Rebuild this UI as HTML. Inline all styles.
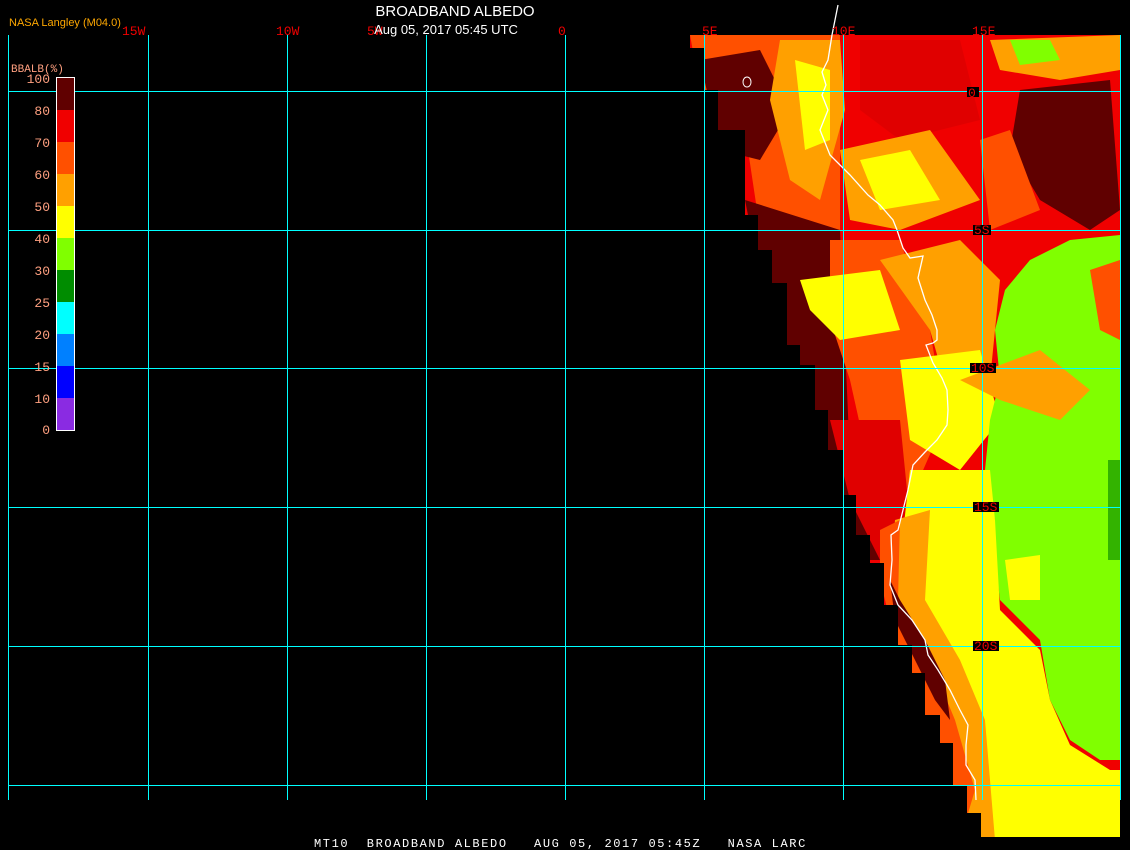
<!DOCTYPE html>
<html><head><meta charset="utf-8"><style>
html,body{margin:0;padding:0;background:#000;}
body{width:1130px;height:850px;overflow:hidden;position:relative;font-family:"Liberation Sans",sans-serif;}
</style></head><body>
<svg width="1130" height="850" style="position:absolute;left:0;top:0">
<defs>
<clipPath id="land">
<polygon points="690,35 1120,35 1120,837 981,837 981,813 967,813 967,785 953,785 953,743 940,743 940,715 925,715 925,673 912,673 912,645 898,645 898,605 884,605 884,563 870,563 870,535 856,535 856,495 843,495 843,450 828,450 828,410 815,410 815,365 800,365 800,345 787,345 787,283 772,283 772,250 758,250 758,215 745,215 745,130 718,130 718,90 705,90 705,48 690,48"/>
</clipPath>
</defs>
<g clip-path="url(#land)">
<rect x="680" y="30" width="450" height="820" fill="#f00000"/>
<path d="M690,35 L840,35 L840,230 L760,230 L745,130 L700,90Z" fill="#ff5000"/>
<path d="M700,60 L760,50 L790,110 L760,160 L720,150Z" fill="#600000"/>
<path d="M780,40 L840,40 L845,110 L820,200 L790,180 L770,100Z" fill="#ffa000"/>
<path d="M795,60 L830,70 L830,140 L805,150Z" fill="#ffff00"/>
<path d="M860,40 L960,40 L980,120 L900,140 L860,110Z" fill="#e00000"/>
<path d="M840,150 L930,130 L980,200 L900,230 L850,220Z" fill="#ffa000"/>
<path d="M860,160 L910,150 L940,200 L880,210Z" fill="#ffff00"/>
<path d="M990,40 L1120,35 L1120,70 L1060,80 L1000,70Z" fill="#ffa000"/>
<path d="M1010,40 L1050,40 L1060,60 L1020,65Z" fill="#80ff00"/>
<path d="M1020,90 L1110,80 L1120,210 L1090,230 L1040,200 L1010,150Z" fill="#600000"/>
<path d="M980,140 L1010,130 L1040,210 L990,230Z" fill="#ff5000"/>
<path d="M745,200 L840,230 L850,460 L870,540 L885,560 L860,560 L820,450 L780,350 L755,250Z" fill="#600000"/>
<path d="M830,240 L900,240 L930,330 L945,420 L910,500 L870,470 L850,380 L830,320Z" fill="#ff5000"/>
<path d="M880,260 L960,240 L1000,280 L990,380 L950,400 L930,330Z" fill="#ffa000"/>
<path d="M800,280 L880,270 L900,330 L840,340 L810,310Z" fill="#ffff00"/>
<path d="M900,360 L980,350 L1000,420 L960,470 L910,440Z" fill="#ffff00"/>
<path d="M830,420 L900,420 L910,520 L880,560 L850,500Z" fill="#e00000"/>
<path d="M1120,235 L1070,240 L1030,260 L1005,290 L995,330 L1000,380 L990,420 L985,470 L995,520 L995,560 L1000,600 L1040,640 L1050,700 L1070,740 L1100,760 L1120,760Z" fill="#80ff00"/>
<path d="M1090,270 L1120,260 L1120,340 L1100,330Z" fill="#ff5000"/>
<path d="M960,380 L1040,350 L1090,390 L1060,420 L1000,400Z" fill="#ffa000"/>
<path d="M910,470 L990,470 L995,520 L1000,610 L1040,650 L1050,700 L1070,745 L1110,770 L1120,770 L1120,840 L960,840 L945,760 L925,640 L900,560Z" fill="#ffff00"/>
<path d="M895,520 L930,510 L925,600 L960,660 L985,720 L995,840 L960,840 L940,740 L905,650 L890,580Z" fill="#ffa000"/>
<path d="M880,530 L900,520 L898,600 L930,660 L955,720 L975,790 L960,840 L940,800 L920,700 L895,640 L880,580Z" fill="#ff5000"/>
<path d="M890,580 L900,600 L925,640 L945,680 L950,720 L935,700 L910,650 L895,620Z" fill="#600000"/>
<path d="M1005,560 L1040,555 L1040,600 L1010,600Z" fill="#ffff00"/>
<rect x="1108" y="460" width="12" height="100" fill="#008000" opacity=".6"/>
</g>
<polyline fill="none" stroke="#fff" stroke-width="1.3" points="838,5 835,20 832,35 828,60 822,72 826,85 822,95 828,110 820,130 830,155 850,175 868,195 880,205 893,220 897,230 903,248 910,258 923,256 918,278 925,300 932,315 937,330 937,340 933,343 926,345 933,363 942,378 947,390 948,410 947,425 937,440 925,452 913,465 908,490 903,510 898,530 891,535 892,560 890,585 898,605 912,620 925,640 928,655 938,670 950,690 960,710 968,725 966,745 966,765 975,780 976,800"/>
<ellipse cx="747" cy="82" rx="4" ry="5" fill="none" stroke="#fff" stroke-width="1"/>
<g stroke="#00ffff" stroke-width="1" shape-rendering="crispEdges">
<line x1="8.5" y1="35" x2="8.5" y2="800"/><line x1="148.5" y1="35" x2="148.5" y2="800"/><line x1="287.5" y1="35" x2="287.5" y2="800"/><line x1="426.5" y1="35" x2="426.5" y2="800"/><line x1="565.5" y1="35" x2="565.5" y2="800"/><line x1="704.5" y1="35" x2="704.5" y2="800"/><line x1="843.5" y1="35" x2="843.5" y2="800"/><line x1="982.5" y1="35" x2="982.5" y2="800"/><line x1="1120.5" y1="35" x2="1120.5" y2="800"/>
<line x1="8" y1="91.5" x2="1120" y2="91.5"/><line x1="8" y1="230.5" x2="1120" y2="230.5"/><line x1="8" y1="368.5" x2="1120" y2="368.5"/><line x1="8" y1="507.5" x2="1120" y2="507.5"/><line x1="8" y1="646.5" x2="1120" y2="646.5"/><line x1="8" y1="785.5" x2="1120" y2="785.5"/>
</g>
<g fill="#000">
<rect x="967" y="87" width="12" height="10"/><rect x="973" y="225" width="18" height="10"/><rect x="970" y="363" width="26" height="10"/><rect x="973" y="502" width="26" height="10"/><rect x="973" y="641" width="26" height="10"/>
</g>
<g shape-rendering="crispEdges">
<rect x="57" y="78" width="17" height="32" fill="#600000"/>
<rect x="57" y="110" width="17" height="32" fill="#f00000"/>
<rect x="57" y="142" width="17" height="32" fill="#ff5000"/>
<rect x="57" y="174" width="17" height="32" fill="#ffa000"/>
<rect x="57" y="206" width="17" height="32" fill="#ffff00"/>
<rect x="57" y="238" width="17" height="32" fill="#80ff00"/>
<rect x="57" y="270" width="17" height="32" fill="#008c00"/>
<rect x="57" y="302" width="17" height="32" fill="#00ffff"/>
<rect x="57" y="334" width="17" height="32" fill="#0080ff"/>
<rect x="57" y="366" width="17" height="32" fill="#0000ff"/>
<rect x="57" y="398" width="17" height="32" fill="#8a2be2"/>
<rect x="56.5" y="77.5" width="18" height="353" fill="none" stroke="#fff" stroke-width="1"/>
</g>
<g font-family="Liberation Mono,monospace" font-size="13" fill="#ffa080" text-anchor="end">
<text x="50" y="83">100</text><text x="50" y="115">80</text><text x="50" y="147">70</text><text x="50" y="179">60</text><text x="50" y="211">50</text><text x="50" y="243">40</text><text x="50" y="275">30</text><text x="50" y="307">25</text><text x="50" y="339">20</text><text x="50" y="371">15</text><text x="50" y="403">10</text><text x="50" y="434">0</text>
</g>
<text x="11" y="72" font-family="Liberation Mono,monospace" font-size="11" fill="#ffa080">BBALB(%)</text>
<g font-family="Liberation Mono,monospace" font-size="13" fill="#f00000">
<text x="122" y="35">15W</text><text x="276" y="35">10W</text><text x="367" y="35">5W</text><text x="558" y="35">0</text><text x="702" y="35">5E</text><text x="832" y="35">10E</text><text x="972" y="35">15E</text>
<text x="968" y="97">0</text><text x="974" y="234">5S</text><text x="971" y="372">10S</text><text x="974" y="511">15S</text><text x="974" y="650">20S</text>
</g>
<text x="9" y="26" font-size="11" fill="#ffa800" font-family="Liberation Sans,sans-serif">NASA Langley (M04.0)</text>
<text x="455" y="16" font-size="15" fill="#fff" text-anchor="middle" font-family="Liberation Sans,sans-serif">BROADBAND ALBEDO</text>
<text x="446" y="34" font-size="13" fill="#fff" text-anchor="middle" font-family="Liberation Sans,sans-serif">Aug 05, 2017 05:45 UTC</text>
<text x="314" y="847" font-size="12" fill="#fff" font-family="Liberation Mono,monospace" letter-spacing="1.6" style="white-space:pre" xml:space="preserve">MT10  BROADBAND ALBEDO   AUG 05, 2017 05:45Z   NASA LARC</text>
</svg>
</body></html>
